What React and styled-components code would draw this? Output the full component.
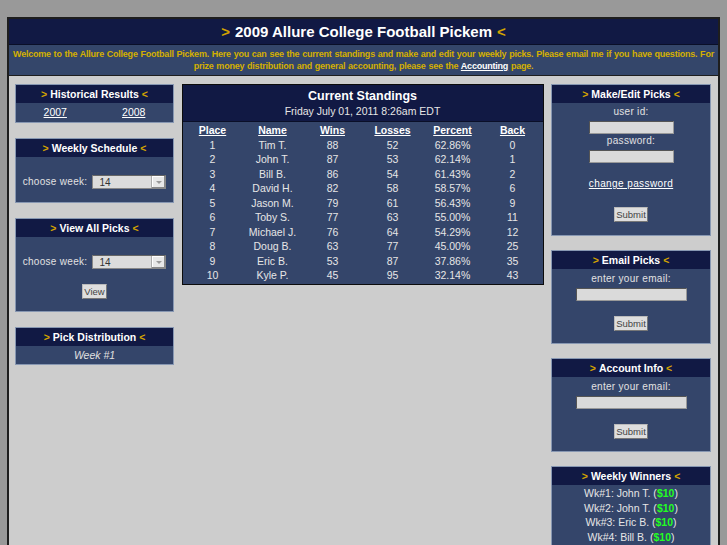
import React from "react";
import styled, { createGlobalStyle } from "styled-components";

const Global = createGlobalStyle`
  html, body { margin: 0; padding: 0; background: #999999; }
  body { font-family: "Liberation Sans", Arial, sans-serif; font-size: 11px; color: #e6e6e6; }
`;

const Page = styled.div`
  padding: 17px 7px 0;
`;

const Frame = styled.div`
  border: 2px solid #1e1e1e;
  border-bottom: none;
  background: #cdcdcd;
  min-height: 540px;
`;

const TitleBar = styled.div`
  background: #111944;
  height: 25px;
  display: flex;
  align-items: center;
  justify-content: center;
  font-size: 15px;
  font-weight: bold;
  color: #ffffff;
  border-bottom: 1px solid #0a0f28;
`;

const Arrow = styled.span`
  color: #d4a400;
  font-weight: bold;
  margin: 0 ${(p) => p.$gap || 4}px;
`;

const Welcome = styled.div`
  background: #34466a;
  color: #d4b000;
  font-size: 9px;
  font-weight: bold;
  letter-spacing: -0.22px;
  word-spacing: 0.5px;
  white-space: nowrap;
  text-align: center;
  line-height: 12px;
  padding: 3px 4px 3px;
  border-bottom: 1px solid #1e1e1e;
  a { color: #ffffff; text-decoration: underline; }
`;

const Columns = styled.div`
  display: flex;
  justify-content: space-between;
  align-items: flex-start;
  padding: 8px 7px 0 6px;
`;

const Column = styled.div`
  display: flex;
  flex-direction: column;
  gap: ${(p) => p.$gap || 15}px;
  width: ${(p) => p.$w}px;
`;

const Box = styled.div`
  border: 1px solid #8797b2;
  background: #34456a;
`;

const BoxHead = styled.div`
  background: #111944;
  height: 18px;
  display: flex;
  align-items: center;
  justify-content: center;
  font-weight: bold;
  font-size: 10.5px;
  color: #ffffff;
`;

const BoxBody = styled.div`
  padding: ${(p) => p.$pad || "4px 0"};
  display: flex;
  flex-direction: column;
  align-items: center;
  text-align: center;
  font-size: 10px;
`;

const LinkRow = styled.div`
  display: grid;
  grid-template-columns: 1fr 1fr;
  width: 100%;
  text-align: center;
  font-size: 10.5px;
  line-height: 14px;
  a { color: #ffffff; text-decoration: underline; }
`;

const Row = styled.div`
  display: flex;
  align-items: center;
  gap: 5px;
`;

const Label = styled.span`
  color: #e2e2e2;
  letter-spacing: 0.3px;
  font-size: 10px;
  line-height: 12px;
`;

const Select = styled.div`
  width: 74px;
  height: 14px;
  box-sizing: border-box;
  background: #dcdcdc;
  border: 1px solid #888;
  border-top-color: #666;
  display: flex;
  align-items: center;
  padding-left: 6px;
  color: #333;
  font-size: 10px;
  position: relative;
`;

const SelectBtn = styled.span`
  position: absolute;
  right: 0;
  top: 0;
  bottom: 0;
  width: 13px;
  background: #e8e8e8;
  border-left: 1px solid #aaa;
  box-shadow: inset -1px -1px 0 #888, inset 1px 1px 0 #fff;
  display: flex;
  align-items: center;
  justify-content: center;
  &::after {
    content: "";
    border-left: 3px solid transparent;
    border-right: 3px solid transparent;
    border-top: 3px solid #999;
  }
`;

const Button = styled.div`
  background: #dedede;
  color: #444;
  font-size: 9.5px;
  height: 13px;
  padding: 0 1px;
  line-height: 13px;
  border: 1px solid #bbb;
  border-right-color: #777;
  border-bottom-color: #777;
`;

const Input = styled.div`
  width: ${(p) => p.$w || 85}px;
  height: 13px;
  box-sizing: border-box;
  background: #dadada;
  border: 1px solid #555;
  border-right-color: #999;
  border-bottom-color: #999;
`;

const Italic = styled.div`
  font-style: italic;
  color: #e0e0e0;
  font-size: 10.5px;
  line-height: 13px;
`;

const Standings = styled.div`
  border: 1px solid #0c0c0c;
  background: #34456a;
`;

const StandHead = styled.div`
  background: #111944;
  height: 36px;
  display: flex;
  flex-direction: column;
  align-items: center;
  justify-content: center;
  border-bottom: 1px solid #0a0f28;
`;

const StandTitle = styled.div`
  font-size: 12.5px;
  font-weight: bold;
  color: #fff;
  line-height: 16px;
`;

const StandDate = styled.div`
  font-size: 10.5px;
  color: #e6e6e6;
  line-height: 14px;
`;

const Table = styled.div`
  display: grid;
  grid-template-columns: repeat(6, 1fr);
  padding: 1px 0 1px;
  grid-auto-rows: 14.55px;
`;

const Cell = styled.div`
  text-align: center;
  line-height: 14.5px;
  font-size: 10.5px;
  font-weight: ${(p) => (p.$head ? "bold" : "normal")};
  text-decoration: ${(p) => (p.$head ? "underline" : "none")};
  color: ${(p) => (p.$head ? "#ffffff" : "#e6e6e6")};
`;

const ChangeLink = styled.a`
  color: #fff;
  text-decoration: underline;
  letter-spacing: 0.4px;
  font-size: 10px;
  line-height: 12px;
`;

const Money = styled.span`
  color: #22ff22;
  font-weight: bold;
`;

const WinnerLine = styled.div`
  line-height: 14.5px;
  font-size: 10.5px;
  color: #e6e6e6;
`;

const Spacer = styled.div`
  height: ${(p) => p.$h}px;
`;

function Head({ children }) {
  return (
    <BoxHead>
      <Arrow $gap={3}>&gt;</Arrow>
      {children}
      <Arrow $gap={3}>&lt;</Arrow>
    </BoxHead>
  );
}

const standings = [
  [1, "Tim T.", 88, 52, "62.86%", 0],
  [2, "John T.", 87, 53, "62.14%", 1],
  [3, "Bill B.", 86, 54, "61.43%", 2],
  [4, "David H.", 82, 58, "58.57%", 6],
  [5, "Jason M.", 79, 61, "56.43%", 9],
  [6, "Toby S.", 77, 63, "55.00%", 11],
  [7, "Michael J.", 76, 64, "54.29%", 12],
  [8, "Doug B.", 63, 77, "45.00%", 25],
  [9, "Eric B.", 53, 87, "37.86%", 35],
  [10, "Kyle P.", 45, 95, "32.14%", 43],
];

const winners = [
  ["Wk#1:", "John T."],
  ["Wk#2: ", "John T."],
  ["Wk#3: ", "Eric B."],
  ["Wk#4: ", "Bill B."],
];

function WeekSelect() {
  return (
    <Select>
      14
      <SelectBtn />
    </Select>
  );
}

export default function App() {
  return (
    <Page>
      <Global />
      <Frame>
        <TitleBar>
          <Arrow $gap={5}>&gt;</Arrow>2009 Allure College Football Pickem<Arrow $gap={5}>&lt;</Arrow>
        </TitleBar>
        <Welcome>
          Welcome to the Allure College Football Pickem. Here you can see the current standings and make and edit your weekly picks. Please email me if you have questions. For
          <br />
          prize money distribution and general accounting, please see the <a href="#">Accounting</a> page.
        </Welcome>
        <Columns>
          <Column $w={159}>
            <Box>
              <Head>Historical Results</Head>
              <BoxBody $pad="2px 0 3px">
                <LinkRow>
                  <a href="#">2007</a>
                  <a href="#">2008</a>
                </LinkRow>
              </BoxBody>
            </Box>
            <Box>
              <Head>Weekly Schedule</Head>
              <BoxBody $pad="18px 0 13px">
                <Row>
                  <Label>choose week:</Label>
                  <WeekSelect />
                </Row>
              </BoxBody>
            </Box>
            <Box>
              <Head>View All Picks</Head>
              <BoxBody $pad="18px 0 12px">
                <Row>
                  <Label>choose week:</Label>
                  <WeekSelect />
                </Row>
                <Spacer $h={15} />
                <Button>View</Button>
              </BoxBody>
            </Box>
            <Box>
              <Head>Pick Distribution</Head>
              <BoxBody $pad="3px 0 2px">
                <Italic>Week #1</Italic>
              </BoxBody>
            </Box>
          </Column>

          <Column $w={362}>
            <Standings>
              <StandHead>
                <StandTitle>Current Standings</StandTitle>
                <StandDate>Friday July 01, 2011 8:26am EDT</StandDate>
              </StandHead>
              <Table>
                {["Place", "Name", "Wins", "Losses", "Percent", "Back"].map((h) => (
                  <Cell key={h} $head>
                    {h}
                  </Cell>
                ))}
                {standings.map((r) =>
                  r.map((v, i) => <Cell key={r[0] + "-" + i}>{v}</Cell>)
                )}
              </Table>
            </Standings>
          </Column>

          <Column $w={160} $gap={14}>
            <Box>
              <Head>Make/Edit Picks</Head>
              <BoxBody $pad="3px 0 13px">
                <Label>user id:</Label>
                <Spacer $h={3} />
                <Input $w={85} />
                <Spacer $h={1} />
                <Label>password:</Label>
                <Spacer $h={3} />
                <Input $w={85} />
                <Spacer $h={15} />
                <ChangeLink href="#">change password</ChangeLink>
                <Spacer $h={17} />
                <Button>Submit</Button>
              </BoxBody>
            </Box>
            <Box>
              <Head>Email Picks</Head>
              <BoxBody $pad="4px 0 12px">
                <Label>enter your email:</Label>
                <Spacer $h={3} />
                <Input $w={111} />
                <Spacer $h={15} />
                <Button>Submit</Button>
              </BoxBody>
            </Box>
            <Box>
              <Head>Account Info</Head>
              <BoxBody $pad="4px 0 12px">
                <Label>enter your email:</Label>
                <Spacer $h={3} />
                <Input $w={111} />
                <Spacer $h={15} />
                <Button>Submit</Button>
              </BoxBody>
            </Box>
            <Box>
              <Head>Weekly Winners</Head>
              <BoxBody $pad="1px 0 4px">
                {winners.map(([w, n]) => (
                  <WinnerLine key={w}>
                    {w} {n} (<Money>$10</Money>)
                  </WinnerLine>
                ))}
              </BoxBody>
            </Box>
          </Column>
        </Columns>
      </Frame>
    </Page>
  );
}
